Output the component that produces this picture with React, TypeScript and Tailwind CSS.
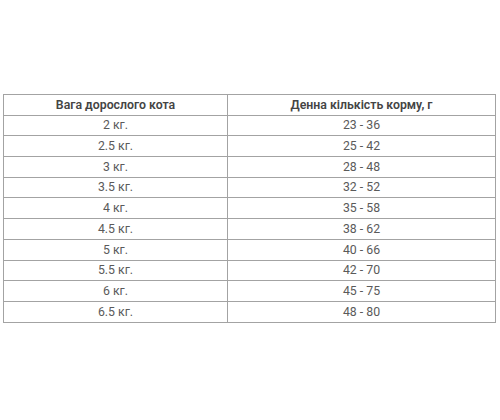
import React from "react";

const rows: [string, string][] = [
  ["2 кг.", "23 - 36"],
  ["2.5 кг.", "25 - 42"],
  ["3 кг.", "28 - 48"],
  ["3.5 кг.", "32 - 52"],
  ["4 кг.", "35 - 58"],
  ["4.5 кг.", "38 - 62"],
  ["5 кг.", "40 - 66"],
  ["5.5 кг.", "42 - 70"],
  ["6 кг.", "45 - 75"],
  ["6.5 кг.", "48 - 80"],
];

export default function App() {
  return (
    <div className="w-[500px] h-[420px] bg-white pt-[94px] pl-[3px]" style={{ fontFamily: "Roboto, 'Noto Sans', sans-serif" }}>
      <table className="border-collapse w-[493px] table-fixed text-[12.3px]">
        <colgroup>
          <col className="w-[224px]" />
          <col />
        </colgroup>
        <thead>
          <tr className="h-[20.7px]">
            <th className="border border-[#a3a3a3] text-center font-semibold text-[#444] p-0 leading-none">Вага дорослого кота</th>
            <th className="border border-[#a3a3a3] text-center font-semibold text-[#444] p-0 leading-none">Денна кількість корму, г</th>
          </tr>
        </thead>
        <tbody>
          {rows.map(([a, b]) => (
            <tr key={a} className="h-[20.7px]">
              <td className="border border-[#a3a3a3] text-center text-[#5a5a5a] p-0 leading-none">{a}</td>
              <td className="border border-[#a3a3a3] text-center text-[#5a5a5a] p-0 leading-none">{b}</td>
            </tr>
          ))}
        </tbody>
      </table>
    </div>
  );
}
